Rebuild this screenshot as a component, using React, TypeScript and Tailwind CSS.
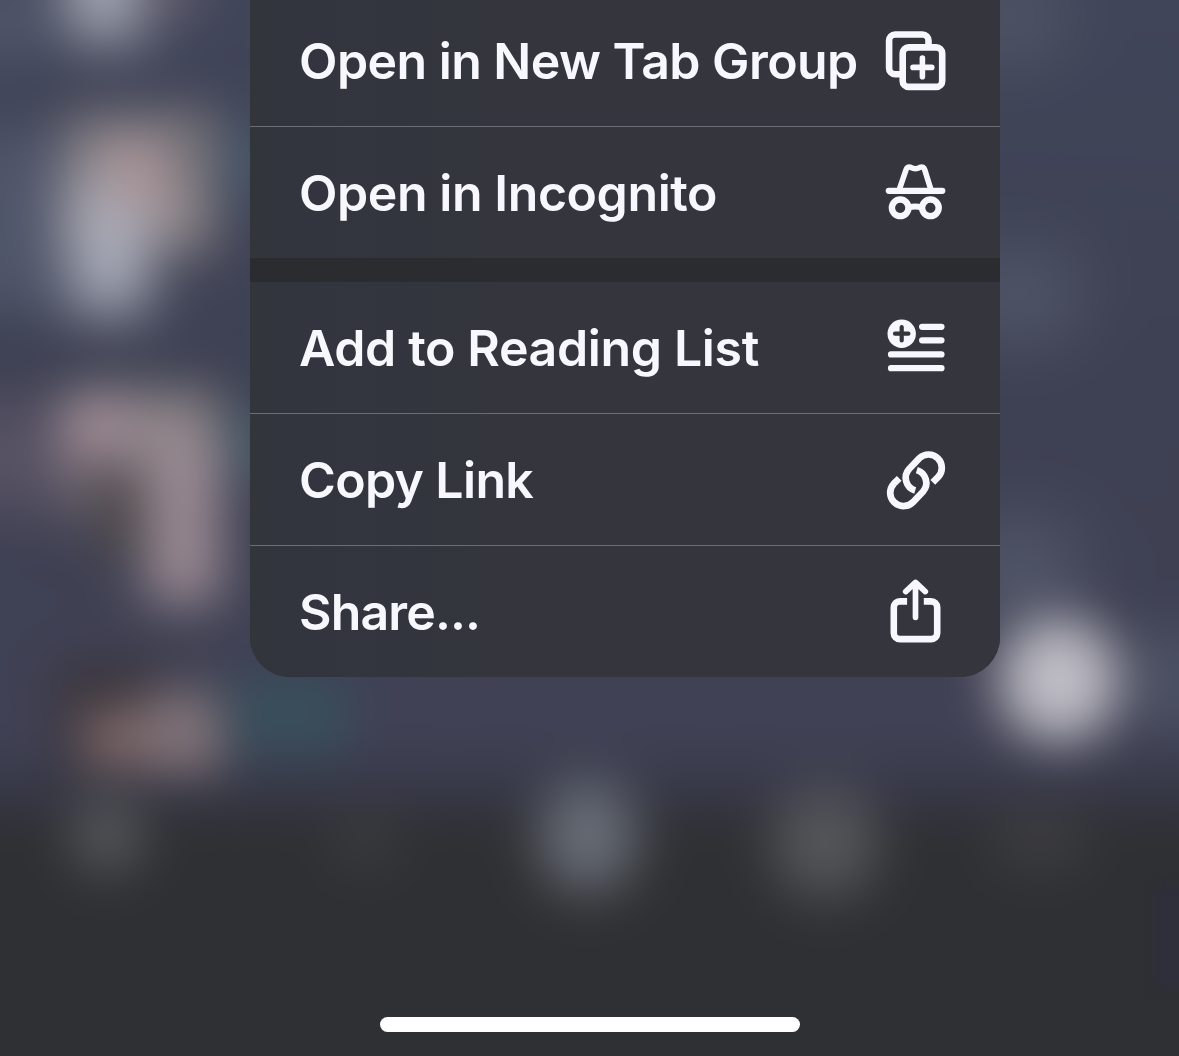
import type { ReactNode } from "react";

const icon = "h-20 w-[100px] shrink-0 fill-none stroke-[#f7f8fd]";

const TabGroupIcon = () => (
  <svg viewBox="0.2 0.8 100 80" className={icon} strokeWidth="6.6">
    <path d="M31 54H25.3a6 6 0 0 1-6-6V20.3a6 6 0 0 1 6-6h27.4a6 6 0 0 1 6 6v6" />
    <rect x="32.9" y="27.2" width="39.5" height="39.5" rx="6" />
    <path d="M43.2 47.2h18.8M52.6 37.8v18.8" strokeWidth="5.6" strokeLinecap="round" />
  </svg>
);

const IncognitoIcon = () => (
  <svg viewBox="0.2 2.8 100 80" className={icon} strokeLinecap="round" strokeLinejoin="round">
    <path d="M19 40.6h53.5" strokeWidth="6.2" />
    <path d="M29.8 38.5 36.3 19.5Q37.6 15.8 41 17.2Q45.6 19.9 50.2 17.2Q53.6 15.8 54.9 19.5L60.8 38.5" strokeWidth="5.6" />
    <circle cx="30.4" cy="57.6" r="8.3" strokeWidth="6.4" />
    <circle cx="60.6" cy="57.6" r="8.3" strokeWidth="6.4" />
    <path d="M39.5 57.2q6-1.6 12 0" strokeWidth="6" />
  </svg>
);

const ReadingListIcon = () => (
  <svg viewBox="0.2 3 100 80" className={icon} strokeWidth="6.2" strokeLinecap="round">
    <circle cx="31.9" cy="28.7" r="14.2" fill="#f7f8fd" stroke="none" />
    <path d="M25.2 28.7h13.4M31.9 22v13.4" stroke="#34353d" strokeWidth="4.2" />
    <path d="M52.3 21.8h19.4M52.3 35.3h19.4M21.2 49.4h50.5M21.2 63.2h50.5" />
  </svg>
);

const LinkIcon = () => (
  <svg viewBox="0 -0.3 100 80" className={icon} strokeWidth="6.7">
    <path d="M62.8 42 68.2 36.6A13.3 13.3 0 0 0 49.4 17.8L39.1 28.6A13.3 13.3 0 0 0 45.2 50.2" />
    <path d="M29.2 38 23.8 43.4A13.3 13.3 0 0 0 42.6 62.2L52.9 51.4A13.3 13.3 0 0 0 46.8 29.8" />
  </svg>
);

const ShareIcon = () => (
  <svg viewBox="0.2 1.8 100 80" className={icon} strokeWidth="6.6">
    <path d="M37.3 31.2H30a6 6 0 0 0-6 6V62.9a6 6 0 0 0 6 6H61.4a6 6 0 0 0 6-6V37.2a6 6 0 0 0-6-6H54" />
    <path d="M45.7 13v34.1M35.9 21.4 45.7 12.2l9.8 9.2" strokeWidth="5.7" strokeLinecap="round" strokeLinejoin="round" />
  </svg>
);

function Item({ label, spacing, children }: { label: string; spacing: string; children: ReactNode }) {
  return (
    <button className="flex h-[131px] w-full items-center justify-between bg-[linear-gradient(to_right,#32353a_0px,#32353f_60px,#34353d_250px,#34353d_100%)] pl-[49px] pr-[30px] text-left">
      <span className={`whitespace-nowrap text-[50px] leading-none font-semibold ${spacing}`}>{label}</span>
      {children}
    </button>
  );
}

const Divider = () => <div className="h-px bg-[#6c6d77]" />;

const blobs = [
  "left-[-60px] top-[-20px] h-[80px] w-[100px] bg-[#50566a] blur-[20px]",
  "left-[-60px] top-[130px] h-[180px] w-[140px] bg-[#50566a] blur-[20px]",
  "left-[-60px] top-[400px] h-[110px] w-[130px] bg-[#575264] blur-[20px]",
  "left-[66px] top-[-80px] h-[120px] w-[80px] bg-[#a9adb8] blur-[20px]",
  "left-[140px] top-[-30px] h-[40px] w-[60px] bg-[#6b6372] blur-[16px]",
  "left-[66px] top-[118px] h-[134px] w-[148px] bg-[#8f888a] blur-[18px]",
  "left-[72px] top-[180px] h-[134px] w-[76px] bg-[#adb0bd] blur-[20px]",
  "left-[110px] top-[145px] h-[62px] w-[66px] bg-[#ac9699] blur-[16px]",
  "left-[172px] top-[118px] h-[65px] w-[45px] bg-[#706f75] blur-[16px]",
  "left-[230px] top-[125px] h-[75px] w-[60px] bg-[#44566a] blur-[16px]",
  "left-[66px] top-[392px] h-[86px] w-[155px] bg-[#8f8789] blur-[16px]",
  "left-[66px] top-[402px] h-[70px] w-[65px] bg-[#9f8a95] blur-[14px]",
  "left-[60px] top-[460px] h-[62px] w-[80px] bg-[#6b626c] blur-[16px]",
  "left-[98px] top-[475px] h-[85px] w-[50px] bg-[#4b4646] blur-[14px]",
  "left-[146px] top-[440px] h-[164px] w-[74px] bg-[#9b8b93] blur-[16px]",
  "left-[232px] top-[410px] h-[65px] w-[50px] bg-[#475c68] blur-[14px]",
  "left-[60px] top-[665px] h-[110px] w-[105px] bg-[#393438] blur-[16px]",
  "left-[82px] top-[708px] h-[60px] w-[138px] bg-[#7a6668] blur-[12px]",
  "left-[145px] top-[692px] h-[74px] w-[76px] bg-[#80747a] blur-[15px]",
  "left-[230px] top-[675px] h-[78px] w-[118px] bg-[#394f5c] blur-[14px]",
  "left-[70px] top-[796px] h-[78px] w-[74px] rounded-full bg-[#54565a] blur-[15px]",
  "left-[335px] top-[810px] h-[60px] w-[60px] bg-[#3a3b3e] blur-[16px]",
  "left-[540px] top-[780px] h-[112px] w-[96px] rounded-full bg-[#6a6f79] blur-[18px]",
  "left-[772px] top-[786px] h-[112px] w-[106px] rounded-full bg-[#56575b] blur-[18px]",
  "left-[995px] top-[812px] h-[58px] w-[88px] bg-[#3d3d40] blur-[16px]",
  "left-[960px] top-[-25px] h-[85px] w-[100px] bg-[#505666] blur-[28px]",
  "left-[960px] top-[250px] h-[90px] w-[115px] bg-[#515668] blur-[28px]",
  "left-[960px] top-[520px] h-[100px] w-[115px] bg-[#515668] blur-[28px]",
  "left-[1130px] top-[630px] h-[100px] w-[110px] bg-[#4b5062] blur-[16px]",
  "left-[999px] top-[618px] h-[124px] w-[120px] rounded-full bg-[#c0bec6] blur-[16px]",
];

export default function App() {
  return (
    <main className="relative flex h-[1056px] w-[1179px] flex-col items-center justify-between overflow-hidden bg-[#2f3033] pb-6 font-['Inter',sans-serif] text-[#f7f8fd]">
      <div aria-hidden="true" className="absolute -inset-x-20 -inset-y-20 bg-[linear-gradient(to_bottom,#414559_80px,#3e4153_460px,#404154_820px,#383a4a_865px,#303136_905px,#2f3033_930px)] blur-[21px]">
        <div className="absolute inset-20">
          {blobs.map((blob) => (
            <div key={blob} className={`absolute ${blob}`} />
          ))}
        </div>
      </div>
      <div aria-hidden="true" className="absolute left-[1155px] top-[885px] h-[105px] w-10 bg-[#2f2e3b] blur-[5px]" />
      <nav className="relative -mt-[5px] ml-[71px] w-[750px] overflow-hidden rounded-b-[40px] bg-[#2b2c2f]">
        <Item label="Open in New Tab Group" spacing="tracking-[-0.55px]"><TabGroupIcon /></Item>
        <Divider />
        <Item label="Open in Incognito" spacing="tracking-[-0.42px]"><IncognitoIcon /></Item>
        <div className="h-6" />
        <Item label="Add to Reading List" spacing="tracking-[-0.36px]"><ReadingListIcon /></Item>
        <Divider />
        <Item label="Copy Link" spacing="tracking-[-0.65px]"><LinkIcon /></Item>
        <Divider />
        <Item label="Share..." spacing="tracking-[-0.85px]"><ShareIcon /></Item>
      </nav>
      <div className="relative h-[15px] w-[420px] rounded-full bg-white" />
    </main>
  );
}
